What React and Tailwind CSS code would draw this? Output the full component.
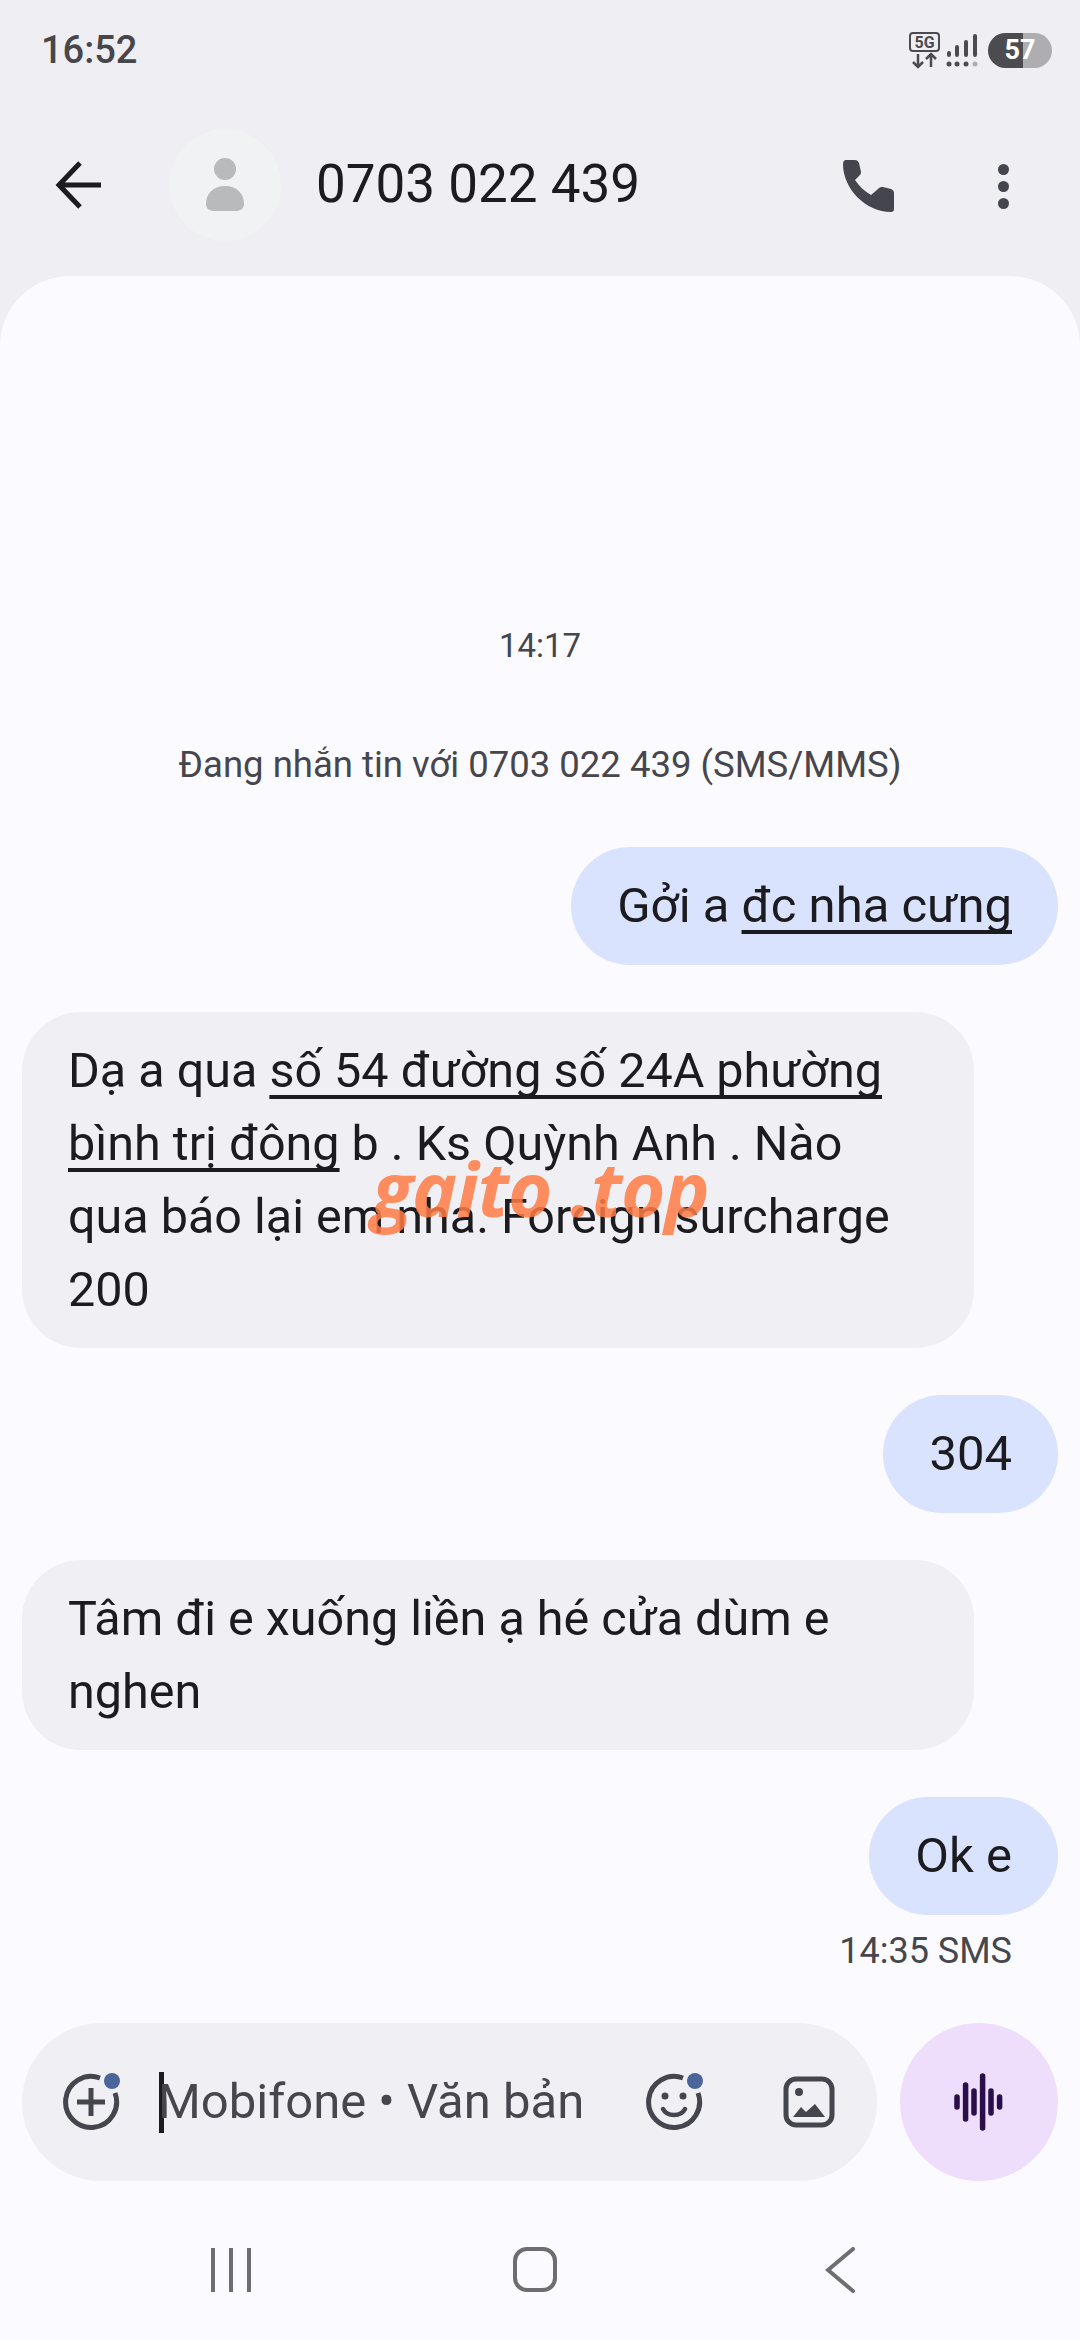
const font = { fontFamily: 'Roboto, "Noto Sans", sans-serif' };

const Back = () => (
  <svg width="48" height="48" viewBox="0 0 48 48" fill="none" stroke="#1c1b20" strokeWidth="5">
    <path d="M46 24H6M25 2 4 24l21 22" />
  </svg>
);

const Avatar = () => (
  <div className="flex h-[112px] w-[112px] items-center justify-center rounded-full bg-[#f1f2f3]">
    <svg width="40" height="54" viewBox="0 0 40 54" fill="#b9babb">
      <ellipse cx="20" cy="11" rx="11" ry="11" />
      <path d="M1 46C1 35 9 28 20 28s19 7 19 18c0 5-4 7-8 7H9c-4 0-8-2-8-7z" />
    </svg>
  </div>
);

const Phone = () => (
  <svg width="54" height="54" viewBox="0 0 54 54" fill="#45454e">
    <path d="M4 1H13C15 1 16 2 17 4L19 13C19 15 18 16 17 17L13 21C17 27 22 32 29 36L36 30C38 28 39 28 41 28L49 30C51 31 52 32 52 34V50C52 52 51 53 49 53C24 53 1 30 1 5C1 3 2 1 4 1Z" />
  </svg>
);

const Plus = () => (
  <svg width="60" height="60" viewBox="0 0 60 60" fill="none">
    <path d="M39 6A25.5 25.5 0 1 0 54 21" stroke="#45454e" strokeWidth="5" />
    <path d="M30 16v28M16 30h28" stroke="#45454e" strokeWidth="5" />
    <circle cx="51" cy="9" r="8" fill="#4b6499" />
  </svg>
);

const Smile = () => (
  <svg width="60" height="60" viewBox="0 0 60 60" fill="none">
    <path d="M39 6A25.5 25.5 0 1 0 54 21" stroke="#45454e" strokeWidth="5" />
    <circle cx="21" cy="24" r="3.5" fill="#45454e" />
    <circle cx="39" cy="24" r="3.5" fill="#45454e" />
    <path d="M19 37c4 8 18 8 22 0" stroke="#45454e" strokeWidth="4.5" strokeLinecap="round" />
    <circle cx="51" cy="9" r="8" fill="#4b6499" />
  </svg>
);

const Gallery = () => (
  <svg width="52" height="52" viewBox="0 0 52 52" fill="none">
    <rect x="3" y="3" width="46" height="46" rx="10" stroke="#45454e" strokeWidth="5" />
    <circle cx="16" cy="16" r="4" fill="#45454e" />
    <path d="M10 41 18 31l5 5 9-8 10 13z" fill="#45454e" />
  </svg>
);

const Wave = () => (
  <svg width="50" height="58" viewBox="0 0 50 58" fill="none" stroke="#2a0f4a" strokeWidth="5.5" strokeLinecap="round">
    <path d="M3 24v10M11.6 12v34M20 18v22M28.6 3v52M37 18v22M45.6 24v10" />
  </svg>
);

const Bubble = ({ mine, children }) => (
  <div className={mine ? 'self-end' : 'self-start'}>
    <div
      className={
        mine
          ? 'rounded-[59px] bg-[#d9e3fe] px-[46px] py-[22px] text-[49px] leading-[74px] whitespace-nowrap text-[#1b1b20]'
          : 'w-[952px] rounded-[59px] bg-[#f0f0f4] px-[46px] py-[22px] text-[48.5px] leading-[73px] whitespace-nowrap text-[#1b1b20]'
      }
    >
      {children}
    </div>
  </div>
);

const Link = ({ children }) => (
  <span className="underline decoration-[4px] underline-offset-[8px] [text-decoration-skip-ink:none]">{children}</span>
);

export default function App() {
  return (
    <div className="relative flex h-[2340px] w-[1080px] flex-col overflow-hidden bg-[#eeeef3]" style={font}>
      {/* status bar */}
      <div className="flex h-[100px] items-center justify-between pl-[41px] pr-[28px]">
        <span className="text-[38px] font-medium text-[#47474b]">16:52</span>
        <div className="flex items-center gap-[10px]">
          <svg width="70" height="38" viewBox="0 0 70 38" fill="none">
            <rect x="2" y="2" width="29" height="18" rx="3" stroke="#4c4c50" strokeWidth="2" />
            <text x="16.5" y="17" textAnchor="middle" fontSize="16" fontWeight="700" fill="#4c4c50">5G</text>
            <path d="M10 23v13M5 31l5 5 5-5M23 36V23M18 28l5-5 5 5" stroke="#4c4c50" strokeWidth="2.5" />
            <g fill="#4c4c50">
              <rect x="39" y="20" width="4" height="6" rx="2" />
              <rect x="47" y="14" width="4" height="12" rx="2" />
              <rect x="56" y="9" width="4" height="17" rx="2" />
              <rect x="65" y="3" width="4" height="23" rx="2" />
              <circle cx="41" cy="33" r="2.5" />
              <circle cx="49" cy="33" r="2.5" />
              <circle cx="58" cy="33" r="2.5" />
            </g>
            <circle cx="67" cy="33" r="2.5" fill="#aeaeb2" />
          </svg>
          <div className="flex h-[35px] w-[64px] items-center justify-center rounded-full bg-[linear-gradient(90deg,#4c4c50_55%,#aeaeb2_55%)] text-[27px] font-bold text-white">
            57
          </div>
        </div>
      </div>

      {/* header */}
      <div className="flex h-[176px] items-start pl-[55px] pr-[71px]">
        <div className="mt-[29px] flex items-center">
          <div className="w-[58px]"><Back /></div>
          <div className="ml-[56px]"><Avatar /></div>
          <span className="ml-[35px] text-[53px] text-[#1b1b20]">0703 022 439</span>
        </div>
        <div className="ml-auto mt-[59px] flex items-center gap-[102px]">
          <Phone />
          <div className="flex flex-col gap-[6px]">
            <span className="h-[11px] w-[11px] rounded-full bg-[#45454e]" />
            <span className="h-[11px] w-[11px] rounded-full bg-[#45454e]" />
            <span className="h-[11px] w-[11px] rounded-full bg-[#45454e]" />
          </div>
        </div>
      </div>

      {/* conversation */}
      <div className="flex flex-1 flex-col rounded-t-[70px] bg-[#fafaff]">
        <div className="flex flex-col px-[22px] pt-[350px]">
          <p className="text-center text-[33px] leading-[40px] text-[#46464c]">14:17</p>
          <p className="mt-[79px] text-center text-[36.5px] leading-[40px] text-[#46464c]">
            Đang nhắn tin với 0703 022 439 (SMS/MMS)
          </p>
          <div className="mt-[62px] flex flex-col gap-[47px]">
            <Bubble mine>Gởi a <Link>đc nha cưng</Link></Bubble>
            <Bubble>
              Dạ a qua <Link>số 54 đường số 24A phường</Link>
              <br />
              <Link>bình trị đông</Link> b . Ks Quỳnh Anh . Nào
              <br />
              qua báo lại em nha. Foreign surcharge
              <br />
              200
            </Bubble>
            <Bubble mine>304</Bubble>
            <Bubble>
              Tâm đi e xuống liền ạ hé cửa dùm e
              <br />
              nghen
            </Bubble>
            <Bubble mine>Ok e</Bubble>
          </div>
          <p className="mt-[16px] self-end pr-[46px] text-[36px] leading-[40px] text-[#46464c]">14:35 SMS</p>
        </div>

        {/* compose */}
        <div className="mt-auto flex items-center gap-[23px] px-[22px]">
          <div className="flex h-[158px] flex-1 items-center rounded-full bg-[#f0f0f4] pl-[39px] pr-[42px] text-[49px] text-[#46464c]">
            <Plus />
            <span className="ml-[38px] h-[61px] w-[5px] bg-[#1b1b20]" />
            <span className="-ml-[6px] whitespace-nowrap">Mobifone • Văn bản</span>
            <div className="ml-auto flex items-center gap-[79px]">
              <Smile />
              <Gallery />
            </div>
          </div>
          <div className="flex h-[158px] w-[158px] items-center justify-center rounded-full bg-[#eedefc]">
            <Wave />
          </div>
        </div>

        {/* nav */}
        <div className="flex h-[159px] items-center justify-between pl-[211px] pr-[225px] pt-[18px]">
          <div className="flex gap-[14px]">
            <span className="h-[44px] w-[4px] bg-[#6e6e72]" />
            <span className="h-[44px] w-[4px] bg-[#6e6e72]" />
            <span className="h-[44px] w-[4px] bg-[#6e6e72]" />
          </div>
          <span className="mr-[6px] h-[45px] w-[44px] rounded-[14px] border-[4px] border-[#6e6e72]" />
          <svg width="30" height="46" viewBox="0 0 30 46" fill="none" stroke="#6e6e72" strokeWidth="4" strokeLinecap="round">
            <path d="M28 2 3 23l25 21" />
          </svg>
        </div>
      </div>

      {/* watermark */}
      <span className="absolute left-[372px] top-[1143px] text-[76px] leading-[90px] font-bold italic tracking-[-1px] whitespace-nowrap text-[#ff7a45]/85" style={{ fontFamily: '"Open Sans", sans-serif' }}>
        gaito .top
      </span>
    </div>
  );
}
